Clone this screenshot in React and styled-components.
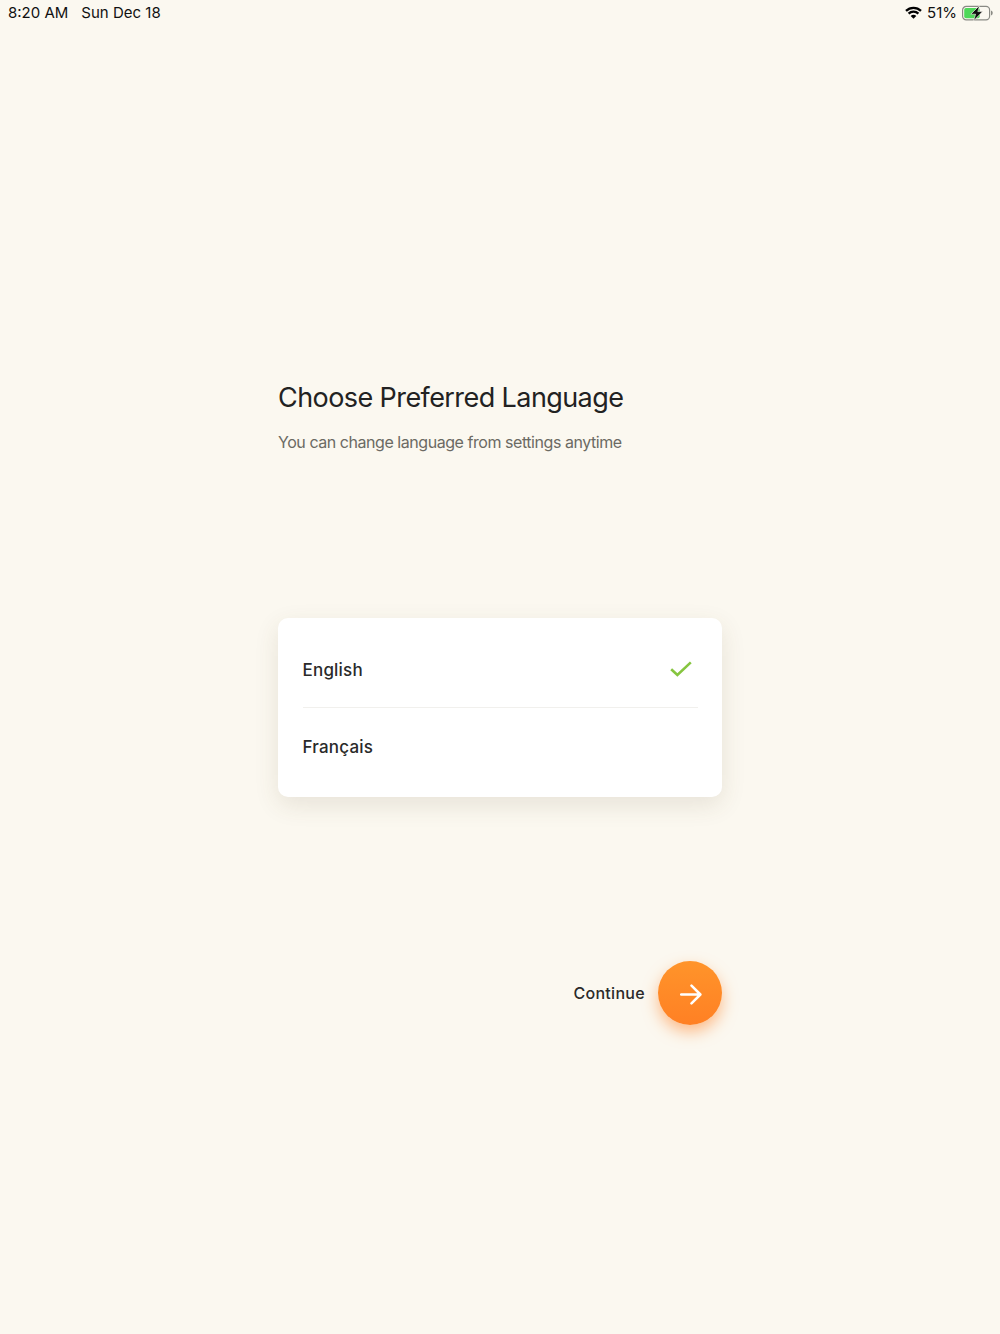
import styled, { createGlobalStyle } from "styled-components";

const languages = [
  { name: "English", selected: true },
  { name: "Français", selected: false },
];

export default function App() {
  return (
    <Page>
      <GlobalStyle />
      <StatusBar>
        <Clock>
          <span>8:20 AM</span>
          <span>Sun Dec 18</span>
        </Clock>
        <Indicators>
          <WifiIcon />
          <span>51%</span>
          <BatteryIcon />
        </Indicators>
      </StatusBar>
      <Content>
        <Title>Choose Preferred Language</Title>
        <Subtitle>You can change language from settings anytime</Subtitle>
        <Card>
          {languages.map((lang) => (
            <Row key={lang.name}>
              <RowLabel>{lang.name}</RowLabel>
              {lang.selected && <CheckIcon />}
            </Row>
          ))}
        </Card>
        <Footer>
          <ContinueLabel>Continue</ContinueLabel>
          <RoundButton aria-label="Continue">
            <ArrowIcon />
          </RoundButton>
        </Footer>
      </Content>
    </Page>
  );
}

function WifiIcon() {
  return (
    <svg width="17" height="13" viewBox="0 0 17 13">
      <path d="M1 4.9a10.8 10.8 0 0 1 15 0" fill="none" stroke="#000" strokeWidth="2.3" />
      <path d="M3.6 7.6a7 7 0 0 1 9.8 0" fill="none" stroke="#000" strokeWidth="2.3" />
      <path d="M8.5 12.8 5.7 9.9a3.9 3.9 0 0 1 5.6 0z" fill="#000" />
    </svg>
  );
}

function BatteryIcon() {
  return (
    <svg width="31" height="16" viewBox="0 0 31 16">
      <rect x="0.6" y="1.4" width="27" height="13.4" rx="3.6" fill="none" stroke="#8a8a84" strokeWidth="1.2" />
      <rect x="2.2" y="3" width="15.5" height="10.2" rx="1.8" fill="#4fd85a" />
      <path d="M29 5.6c1.2.4 1.7 1.3 1.7 2.4s-.5 2-1.7 2.4z" fill="#8a8a84" />
      <path d="M17.6 .4 8.8 9.2h4.8L11.6 15.8 20.6 6.6h-4.8z" fill="#111" stroke="#fbf8f0" strokeWidth="0.6" />
    </svg>
  );
}

function CheckIcon() {
  return (
    <CheckSvg width="22" height="16" viewBox="0 0 22 16">
      <path d="M1.2 8.2 7.4 14 20.8 1.4" fill="none" stroke="#86c540" strokeWidth="2.6" />
    </CheckSvg>
  );
}

function ArrowIcon() {
  return (
    <ArrowSvg width="22" height="21" viewBox="0 0 22 21">
      <path
        d="M1.2 10.5h19M11.5 1.6l8.9 8.9-8.9 8.9"
        fill="none"
        stroke="#fff"
        strokeWidth="2.5"
        strokeLinecap="round"
        strokeLinejoin="round"
      />
    </ArrowSvg>
  );
}

const GlobalStyle = createGlobalStyle`
  html, body {
    margin: 0;
    padding: 0;
    background: #fbf8f0;
  }
`;

const Page = styled.div`
  height: 1334px;
  overflow: hidden;
  background: #fbf8f0;
  font-family: Inter, "Liberation Sans", sans-serif;
  color: #222;
`;

const StatusBar = styled.div`
  display: flex;
  justify-content: space-between;
  align-items: center;
  height: 25px;
  padding: 0 7px 0 8px;
  font-size: 15px;
  color: #111;
`;

const Clock = styled.div`
  display: flex;
  gap: 13px;
`;

const Indicators = styled.div`
  display: flex;
  align-items: center;
  gap: 5px;
`;

const Content = styled.div`
  width: 444px;
  margin: 0 auto;
  padding-top: 355px;
`;

const Title = styled.h1`
  margin: 0;
  font-size: 27px;
  line-height: 36px;
  font-weight: 400;
  letter-spacing: -0.58px;
  color: #222;
  white-space: nowrap;
`;

const Subtitle = styled.p`
  margin: 16px 0 0;
  font-size: 16px;
  line-height: 20px;
  letter-spacing: -0.45px;
  color: #6b6a63;
  white-space: nowrap;
`;

const Card = styled.div`
  margin-top: 166px;
  padding: 13px 24px 13px 24.5px;
  background: #fff;
  border-radius: 10px;
  box-shadow: 0 8px 24px rgba(90, 75, 40, 0.12);
`;

const Row = styled.div`
  display: flex;
  align-items: center;
  justify-content: space-between;
  height: 76px;
  padding-right: 6px;

  & + & {
    border-top: 1px solid #f1f0ed;
  }
`;

const RowLabel = styled.span`
  padding-top: 2px;
  font-size: 17px;
  font-weight: 500;
  letter-spacing: 0.2px;
  color: #2a2a2a;
`;

const CheckSvg = styled.svg`
  display: block;
`;

const ArrowSvg = styled.svg`
  display: block;
  margin: 2px 0 0 1px;
`;

const Footer = styled.div`
  display: flex;
  justify-content: flex-end;
  align-items: center;
  gap: 13px;
  margin-top: 164px;
`;

const ContinueLabel = styled.span`
  font-size: 16px;
  font-weight: 500;
  letter-spacing: 0.3px;
  color: #2a2a2a;
`;

const RoundButton = styled.button`
  display: flex;
  align-items: center;
  justify-content: center;
  width: 64px;
  height: 64px;
  padding: 0;
  border: none;
  border-radius: 50%;
  background: linear-gradient(180deg, #ff942a 0%, #ff8024 100%);
  box-shadow: 0 7px 15px rgba(255, 128, 36, 0.5);
`;
